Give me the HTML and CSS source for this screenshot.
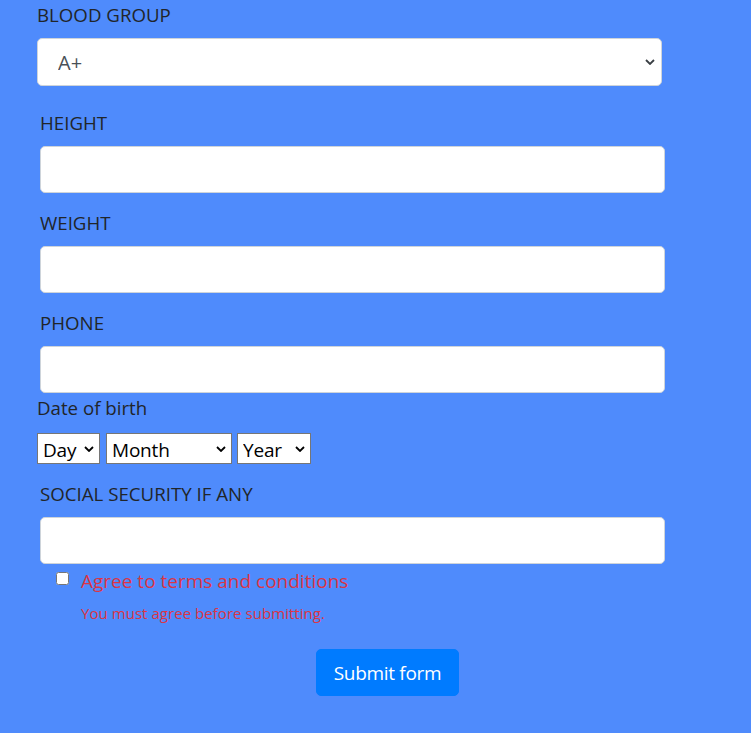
FILE: index.html
```html
<!DOCTYPE html>
<html>
<head>
<meta charset="utf-8">
<link rel="stylesheet" href="styles.css">
</head>
<body>
<form class="form">
  <div class="group group-first">
    <label class="label">BLOOD GROUP</label>
    <div class="select-wrap">
      <select class="control control-select">
        <option>A+</option>
      </select>
      <svg class="chev" width="10" height="6" viewBox="0 0 10 6"><path d="M1 1l4 4 4-4" fill="none" stroke="#3a3f44" stroke-width="1.8"/></svg>
    </div>
  </div>
  <div class="group indented">
    <label class="label">HEIGHT</label>
    <input class="control" type="text">
  </div>
  <div class="group indented">
    <label class="label">WEIGHT</label>
    <input class="control" type="text">
  </div>
  <div class="group indented group-phone">
    <label class="label">PHONE</label>
    <input class="control" type="text">
  </div>
  <div class="dob">
    <label class="label">Date of birth</label>
    <div class="dob-row">
      <span class="mini-wrap w-day"><select class="mini"><option>Day</option></select><svg class="mini-chev" width="10" height="6" viewBox="0 0 10 6"><path d="M1 1l4 4 4-4" fill="none" stroke="#000" stroke-width="1.8"/></svg></span>
      <span class="mini-wrap w-month"><select class="mini"><option>Month</option></select><svg class="mini-chev" width="10" height="6" viewBox="0 0 10 6"><path d="M1 1l4 4 4-4" fill="none" stroke="#000" stroke-width="1.8"/></svg></span>
      <span class="mini-wrap w-year"><select class="mini"><option>Year</option></select><svg class="mini-chev" width="10" height="6" viewBox="0 0 10 6"><path d="M1 1l4 4 4-4" fill="none" stroke="#000" stroke-width="1.8"/></svg></span>
    </div>
  </div>
  <div class="group indented group-ssn">
    <label class="label">SOCIAL SECURITY IF ANY</label>
    <input class="control" type="text">
  </div>
  <div class="check">
    <input class="check-box" type="checkbox">
    <div class="check-text">
      <label class="check-label">Agree to terms and conditions</label>
      <div class="feedback">You must agree before submitting.</div>
    </div>
  </div>
  <div class="actions">
    <button class="btn" type="button">Submit form</button>
  </div>
</form>
</body>
</html>
```
FILE: styles.css
```css
html, body {
  margin: 0;
  padding: 0;
}
body {
  background: #4f8bfc;
  font-family: "Open Sans", "Noto Sans", sans-serif;
  color: #212529;
  width: 751px;
  height: 733px;
  overflow: hidden;
}
.form {
  padding-left: 37px;
  width: 624px;
}
.group {
  display: flex;
  flex-direction: column;
  margin-bottom: 15px;
}
.group-first {
  margin-bottom: 22px;
}
.group-phone {
  margin-bottom: 0;
}
.indented {
  padding-left: 3px;
}
.label {
  font-size: 18.7px;
  line-height: 30px;
  margin-bottom: 8px;
}
.control {
  box-sizing: border-box;
  width: 625px;
  height: 47px;
  border: 1px solid #ced4da;
  border-radius: 5px;
  background: #fff;
  font-family: inherit;
  font-size: 20px;
  color: #495057;
  padding: 0 20px;
  margin: 0;
  outline: none;
}
.select-wrap {
  position: relative;
  width: 625px;
}
.control-select {
  appearance: none;
  -webkit-appearance: none;
  height: 48px;
  padding-left: 20px;
}
.chev {
  position: absolute;
  right: 7px;
  top: 21px;
}
.dob {
  display: flex;
  flex-direction: column;
}
.dob .label {
  margin-bottom: 10px;
}
.dob-row {
  display: flex;
}
.mini-wrap {
  position: relative;
  display: inline-block;
  height: 31px;
}
.w-day { width: 63px; margin-right: 6px; }
.w-month { width: 126px; margin-right: 5px; }
.w-year { width: 74px; }
.mini {
  appearance: none;
  -webkit-appearance: none;
  box-sizing: border-box;
  width: 100%;
  height: 31px;
  border: 1px solid #767676;
  border-radius: 0;
  background: #fff;
  font-family: inherit;
  font-size: 19px;
  color: #000;
  padding: 3px 0 0 5px;
  margin: 0;
  letter-spacing: -0.2px;
}
.mini-chev {
  position: absolute;
  right: 6px;
  top: 13px;
  pointer-events: none;
}
.group-ssn {
  margin-top: 15px;
  margin-bottom: 8px;
}
.check {
  display: flex;
  align-items: flex-start;
  padding-left: 19px;
}
.check-box {
  width: 13px;
  height: 13px;
  margin: 0 12px 0 0;
}
.check-text {
  display: flex;
  flex-direction: column;
}
.check-label {
  color: #dc3545;
  font-size: 19px;
  line-height: 18px;
}
.feedback {
  color: #dc3545;
  font-size: 15.1px;
  line-height: 20px;
  margin-top: 13px;
}
.actions {
  display: flex;
  padding-left: 279px;
  margin-top: 26px;
}
.btn {
  box-sizing: border-box;
  width: 143px;
  height: 47px;
  background: #007bff;
  color: #fff;
  border: 1px solid #007bff;
  border-radius: 5px;
  font-family: inherit;
  font-size: 19px;
  letter-spacing: -0.3px;
  padding: 0;
}
```
